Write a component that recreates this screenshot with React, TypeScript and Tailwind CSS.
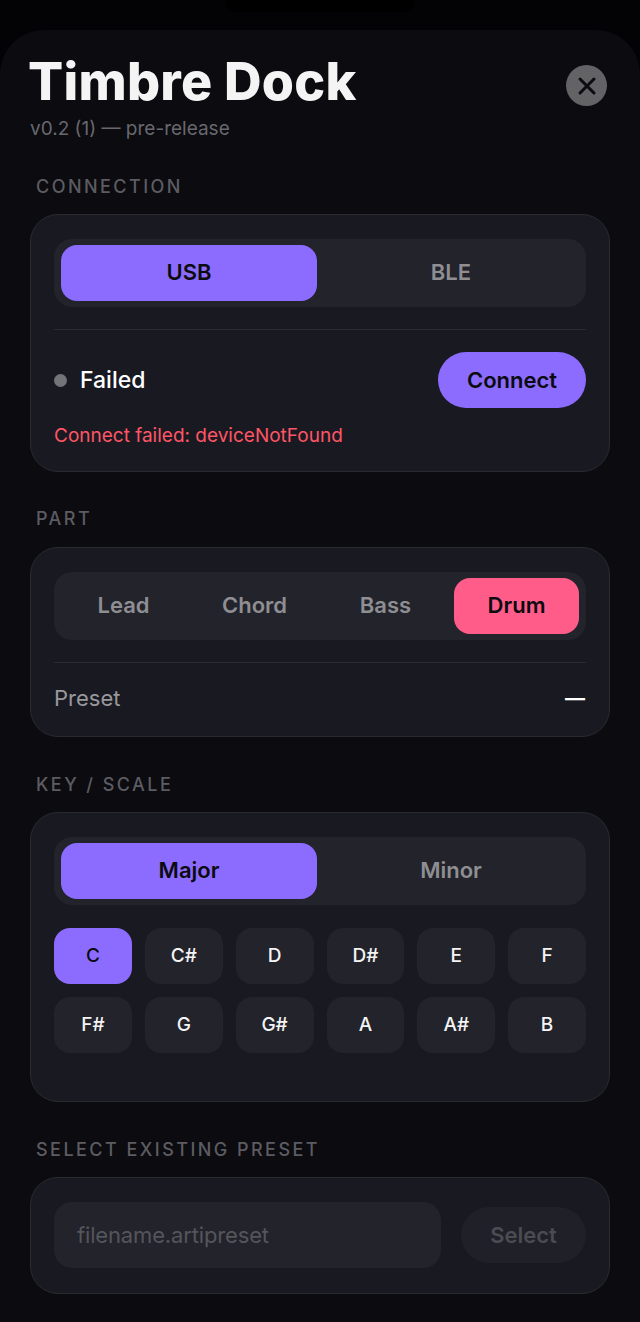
const keys = ["C", "C#", "D", "D#", "E", "F", "F#", "G", "G#", "A", "A#", "B"];

function SectionLabel({ children, className }: { children: string; className: string }) {
  return (
    <h2 className={`pl-[6px] text-[18px] leading-[22px] font-medium tracking-[2.45px] text-[#5c5c62] ${className}`}>
      {children}
    </h2>
  );
}

function Card({ children, className }: { children: React.ReactNode; className: string }) {
  return (
    <section className={`rounded-[28px] border border-[#2a2b31] bg-[#191a21] px-[23px] pt-[24px] ${className}`}>
      {children}
    </section>
  );
}

function Segmented({ items, active, activeClass }: { items: string[]; active: string; activeClass: string }) {
  return (
    <div className="flex h-[68px] gap-[6px] rounded-[18px] bg-[#22232b] px-[7px] py-[6px]">
      {items.map((item) => (
        <button
          key={item}
          className={`flex-1 rounded-[16px] pb-[1px] text-[22px] font-semibold ${
            item === active ? `${activeClass} text-[#0b0b10]` : "text-[#8e8e93]"
          }`}
        >
          {item}
        </button>
      ))}
    </div>
  );
}

export default function App() {
  return (
    <div className="relative h-[1322px] w-[640px] overflow-hidden bg-[#030305] font-['Inter',sans-serif]">
      <div className="absolute top-0 left-[225px] h-[12px] w-[190px] rounded-b-[20px] bg-black" />

      <main className="mt-[30px] h-[1292px] rounded-t-[44px] bg-[#0b0b10] px-[30px]">
        <header className="flex items-start justify-between pt-[22px]">
          <div>
            <h1 className="-ml-[2px] text-[52px] leading-[60px] font-extrabold tracking-[0.25px] text-[#f4f4f5]">Timbre Dock</h1>
            <p className="mt-[5px] text-[19px] leading-[24px] text-[#68686e]">v0.2 (1) — pre-release</p>
          </div>
          <button className="mt-[13px] mr-[3px] flex h-[41px] w-[41px] items-center justify-center rounded-full bg-[#636365]">
            <svg width="20" height="20" viewBox="0 0 20 20" fill="none" stroke="#0b0b10" strokeWidth="3" strokeLinecap="round">
              <path d="M3 3l14 14M17 3L3 17" />
            </svg>
          </button>
        </header>

        <SectionLabel className="mt-[35px]">CONNECTION</SectionLabel>
        <Card className="mt-[16px] h-[258px]">
          <Segmented items={["USB", "BLE"]} active="USB" activeClass="bg-[#8c6cff]" />
          <div className="mt-[22px] h-px bg-[#2b2c32]" />
          <div className="mt-[22px] flex h-[56px] items-center justify-between">
            <div className="flex items-center gap-[13px]">
              <span className="h-[13px] w-[13px] rounded-full bg-[#737378]" />
              <span className="pt-[1px] text-[23px] font-medium text-white">Failed</span>
            </div>
            <button className="h-[56px] w-[148px] rounded-full bg-[#8c6cff] text-[22px] font-semibold text-[#0b0b10]">
              Connect
            </button>
          </div>
          <p className="mt-[16px] text-[19px] leading-[24px] text-[#ff5566]">Connect failed: deviceNotFound</p>
        </Card>

        <SectionLabel className="mt-[36px]">PART</SectionLabel>
        <Card className="mt-[17px] h-[190px]">
          <Segmented items={["Lead", "Chord", "Bass", "Drum"]} active="Drum" activeClass="bg-[#ff5c8a]" />
          <div className="mt-[22px] h-px bg-[#2b2c32]" />
          <div className="mt-[21px] flex h-[28px] items-center justify-between">
            <span className="text-[22px] text-[#98989d]">Preset</span>
            <span className="mr-[1px] text-[20px] font-bold text-white">—</span>
          </div>
        </Card>

        <SectionLabel className="mt-[37px]">KEY / SCALE</SectionLabel>
        <Card className="mt-[16px] h-[290px]">
          <Segmented items={["Major", "Minor"]} active="Major" activeClass="bg-[#8c6cff]" />
          <div className="mt-[23px] grid grid-cols-6 gap-[13px]">
            {keys.map((key) => (
              <button
                key={key}
                className={`h-[56px] rounded-[16px] text-[19px] font-medium ${
                  key === "C" ? "bg-[#8c6cff] text-[#0b0b10]" : "bg-[#22232b] text-[#f4f4f5]"
                }`}
              >
                {key}
              </button>
            ))}
          </div>
        </Card>

        <SectionLabel className="mt-[37px]">SELECT EXISTING PRESET</SectionLabel>
        <Card className="mt-[16px] h-[117px]">
          <div className="flex items-center gap-[20px]">
            <div className="flex h-[66px] w-[387px] items-center rounded-[18px] bg-[#22232b] px-[23px] text-[22px] tracking-[-0.15px] text-[#55555c]">
              filename.artipreset
            </div>
            <button className="h-[56px] flex-1 rounded-full bg-[#1f2028] text-[22px] font-semibold text-[#4b4b52]">
              Select
            </button>
          </div>
        </Card>
      </main>
    </div>
  );
}
